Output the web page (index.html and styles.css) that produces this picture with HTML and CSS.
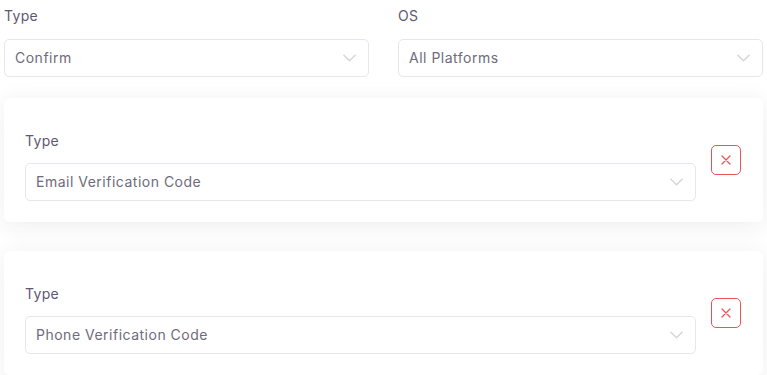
FILE: index.html
```html
<!DOCTYPE html>
<html lang="en">
<head>
<meta charset="utf-8">
<title>Form</title>
<link rel="stylesheet" href="styles.css">
</head>
<body>
<div class="page">
  <div class="top-row">
    <div class="field">
      <label class="label">Type</label>
      <div class="select"><span class="value">Confirm</span><svg class="chev" viewBox="0 0 14 8" width="13" height="8"><path d="M1 1l6 6 6-6" fill="none" stroke="currentColor" stroke-width="1.6" stroke-linecap="round" stroke-linejoin="round"/></svg></div>
    </div>
    <div class="field">
      <label class="label">OS</label>
      <div class="select"><span class="value">All Platforms</span><svg class="chev" viewBox="0 0 14 8" width="13" height="8"><path d="M1 1l6 6 6-6" fill="none" stroke="currentColor" stroke-width="1.6" stroke-linecap="round" stroke-linejoin="round"/></svg></div>
    </div>
  </div>

  <div class="card">
    <div class="card-row">
      <div class="field grow">
        <label class="label">Type</label>
        <div class="select"><span class="value">Email Verification Code</span><svg class="chev" viewBox="0 0 14 8" width="13" height="8"><path d="M1 1l6 6 6-6" fill="none" stroke="currentColor" stroke-width="1.6" stroke-linecap="round" stroke-linejoin="round"/></svg></div>
      </div>
      <button class="remove" type="button" aria-label="Remove"><svg viewBox="0 0 10 10" width="10" height="10"><path d="M1 1l8 8M9 1l-8 8" fill="none" stroke="currentColor" stroke-width="1.3" stroke-linecap="round"/></svg></button>
    </div>
  </div>

  <div class="card">
    <div class="card-row">
      <div class="field grow">
        <label class="label">Type</label>
        <div class="select"><span class="value">Phone Verification Code</span><svg class="chev" viewBox="0 0 14 8" width="13" height="8"><path d="M1 1l6 6 6-6" fill="none" stroke="currentColor" stroke-width="1.6" stroke-linecap="round" stroke-linejoin="round"/></svg></div>
      </div>
      <button class="remove" type="button" aria-label="Remove"><svg viewBox="0 0 10 10" width="10" height="10"><path d="M1 1l8 8M9 1l-8 8" fill="none" stroke="currentColor" stroke-width="1.3" stroke-linecap="round"/></svg></button>
    </div>
  </div>
</div>
</body>
</html>
```
FILE: styles.css
```css
* { box-sizing: border-box; }
html, body { margin: 0; padding: 0; background: #fff; }
body {
  font-family: Inter, "Open Sans", "Liberation Sans", sans-serif;
  font-size: 14px;
  color: #6e6b7b;
}
.page {
  padding: 6px 4px 0 4px;
}
.top-row {
  display: grid;
  grid-template-columns: 1fr 1fr;
  column-gap: 29px;
  margin-bottom: 21px;
}
.field { display: flex; flex-direction: column; }
.grow { flex: 1; min-width: 0; }
.label {
  display: block;
  line-height: 20px;
  height: 20px;
  margin-bottom: 13px;
  color: #5e5873;
  font-size: 14px;
  letter-spacing: 0.3px;
}
.card .label { margin-top: 12px; margin-bottom: 12px; }
.select {
  height: 38px;
  border: 1px solid #e7e6ec;
  border-radius: 5px;
  background: #fff;
  display: flex;
  align-items: center;
  justify-content: space-between;
  padding: 0 12px 0 10px;
}
.value { color: #6e6b7b; letter-spacing: 0.5px; line-height: 20px; margin-top: -1px; }
.chev { color: #d6d5da; }
.card {
  background: #fff;
  border-radius: 6px;
  box-shadow: 0 4px 24px 0 rgba(34, 41, 47, 0.08);
  padding: 21px 22px 21px 21px;
  margin-bottom: 29px;
}
.card-row {
  display: flex;
  align-items: center;
  gap: 15px;
}
.remove {
  width: 30px;
  height: 30px;
  flex: none;
  border: 1px solid #ea5455;
  border-radius: 5px;
  background: #fff;
  color: #ea5455;
  display: flex;
  align-items: center;
  justify-content: center;
  padding: 0;
}
```
